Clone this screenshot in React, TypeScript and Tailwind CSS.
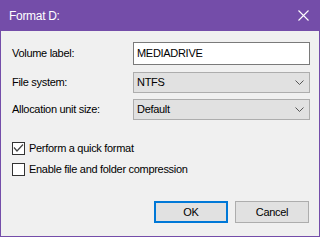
export default function App() {
  return (
    <div className="w-[320px] h-[237px] flex flex-col font-['Liberation_Sans',Arial,sans-serif] text-[11px] tracking-[-0.3px] text-black">
      <div className="h-[31px] shrink-0 bg-[#744da9] flex items-center justify-between pl-[9px] pr-[11px] text-white text-[12px]">
        <span>Format D:</span>
        <svg width="11" height="11" viewBox="0 0 11 11">
          <path d="M0.5 0.5L10.5 10.5M10.5 0.5L0.5 10.5" stroke="white" strokeWidth="1.1" />
        </svg>
      </div>
      <div className="flex-1 bg-[#f0f0f0] border-x border-b border-[#744da9] flex flex-col pl-[11px]">
        <div className="mt-[11px] flex items-center h-[23px]">
          <span className="w-[121px]">Volume label:</span>
          <div className="w-[177px] h-[23px] bg-white border border-[#7a7a7a] flex items-center pl-[3px]">MEDIADRIVE</div>
        </div>
        <div className="mt-[7px] flex items-center h-[21px]">
          <span className="w-[121px]">File system:</span>
          <div className="w-[177px] h-[21px] bg-[#e1e1e1] border border-[#adadad] flex items-center justify-between pl-[3px] pr-[5px]">
            <span>NTFS</span>
            <svg width="9" height="5" viewBox="0 0 9 5">
              <path d="M0.5 0.5L4.5 4.5L8.5 0.5" stroke="#555" fill="none" strokeWidth="1" />
            </svg>
          </div>
        </div>
        <div className="mt-[6px] flex items-center h-[21px]">
          <span className="w-[121px]">Allocation unit size:</span>
          <div className="w-[177px] h-[21px] bg-[#e1e1e1] border border-[#adadad] flex items-center justify-between pl-[3px] pr-[5px]">
            <span>Default</span>
            <svg width="9" height="5" viewBox="0 0 9 5">
              <path d="M0.5 0.5L4.5 4.5L8.5 0.5" stroke="#555" fill="none" strokeWidth="1" />
            </svg>
          </div>
        </div>
        <div className="mt-[22px] flex items-center h-[13px]">
          <div className="w-[13px] h-[13px] bg-white border border-[#333] flex items-center justify-center">
            <svg width="11" height="11" viewBox="0 0 11 11">
              <path d="M1 4.5L4 8L10 1.5" stroke="#444" fill="none" strokeWidth="1.2" />
            </svg>
          </div>
          <span className="ml-[4px]">Perform a quick format</span>
        </div>
        <div className="mt-[8px] flex items-center h-[13px]">
          <div className="w-[13px] h-[13px] bg-white border border-[#333]" />
          <span className="ml-[4px]">Enable file and folder compression</span>
        </div>
        <div className="mt-[25px] flex pl-[142px]">
          <div className="w-[74px] h-[22px] bg-[#e1e1e1] border-2 border-[#0078d7] flex items-center justify-center">OK</div>
          <div className="ml-[7px] w-[74px] h-[22px] bg-[#e1e1e1] border border-[#adadad] flex items-center justify-center">Cancel</div>
        </div>
      </div>
    </div>
  );
}
